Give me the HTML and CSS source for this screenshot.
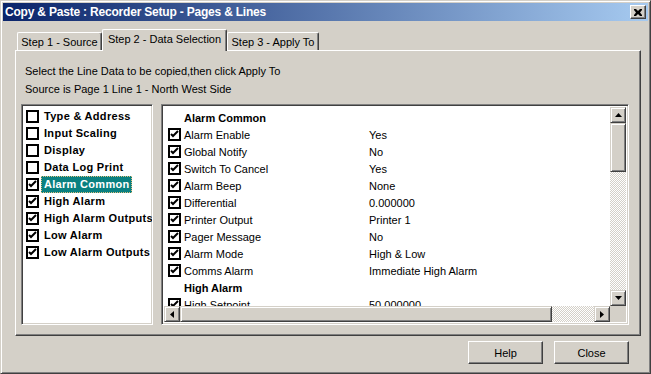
FILE: index.html
```html
<!DOCTYPE html>
<html lang="en">
<head>
  <meta charset="UTF-8">
  <title>Copy &amp; Paste : Recorder Setup - Pages &amp; Lines</title>
  <link rel="stylesheet" href="styles.css">
</head>
<body>
  <div class="window">
    <div class="titlebar">
      <span class="title">Copy &amp; Paste : Recorder Setup - Pages &amp; Lines</span>
      <span class="close-btn">
        <svg width="8" height="7" viewBox="0 0 8 7"><path d="M0 0h2l2 2 2-2h2v1l-2 2.5 2 2.5v1h-2l-2-2-2 2h-2v-1l2-2.5-2-2.5z" fill="#000"/></svg>
      </span>
    </div>

    <div class="client">
      <div class="tabs">
        <div class="tab tab1">Step 1 - Source</div>
        <div class="tab tab2 active">Step 2 - Data Selection</div>
        <div class="tab tab3">Step 3 - Apply To</div>
      </div>

      <div class="panel">
        <p class="info">Select the Line Data to be copied,then click Apply To</p>
        <p class="info">Source is Page 1 Line 1 - North West Side</p>

        <div class="lists">
          <div class="sunken left-list">
            <div class="lrow"><span class="cb"></span><span class="ltext">Type &amp; Address</span></div>
            <div class="lrow"><span class="cb"></span><span class="ltext">Input Scaling</span></div>
            <div class="lrow"><span class="cb"></span><span class="ltext">Display</span></div>
            <div class="lrow"><span class="cb"></span><span class="ltext">Data Log Print</span></div>
            <div class="lrow"><span class="cb on"><svg width="9" height="9" viewBox="0 0 9 9"><path d="M1 4l2 2 5-5" /></svg></span><span class="ltext selected">Alarm Common</span></div>
            <div class="lrow"><span class="cb on"><svg width="9" height="9" viewBox="0 0 9 9"><path d="M1 4l2 2 5-5" /></svg></span><span class="ltext">High Alarm</span></div>
            <div class="lrow"><span class="cb on"><svg width="9" height="9" viewBox="0 0 9 9"><path d="M1 4l2 2 5-5" /></svg></span><span class="ltext">High Alarm Outputs</span></div>
            <div class="lrow"><span class="cb on"><svg width="9" height="9" viewBox="0 0 9 9"><path d="M1 4l2 2 5-5" /></svg></span><span class="ltext">Low Alarm</span></div>
            <div class="lrow"><span class="cb on"><svg width="9" height="9" viewBox="0 0 9 9"><path d="M1 4l2 2 5-5" /></svg></span><span class="ltext">Low Alarm Outputs</span></div>
          </div>

          <div class="sunken right-list">
            <div class="rcontent">
              <div class="rrow head"><span class="rname">Alarm Common</span></div>
              <div class="rrow"><span class="cb on"><svg width="9" height="9" viewBox="0 0 9 9"><path d="M1 4l2 2 5-5" /></svg></span><span class="rname">Alarm Enable</span><span class="rval">Yes</span></div>
              <div class="rrow"><span class="cb on"><svg width="9" height="9" viewBox="0 0 9 9"><path d="M1 4l2 2 5-5" /></svg></span><span class="rname">Global Notify</span><span class="rval">No</span></div>
              <div class="rrow"><span class="cb on"><svg width="9" height="9" viewBox="0 0 9 9"><path d="M1 4l2 2 5-5" /></svg></span><span class="rname">Switch To Cancel</span><span class="rval">Yes</span></div>
              <div class="rrow"><span class="cb on"><svg width="9" height="9" viewBox="0 0 9 9"><path d="M1 4l2 2 5-5" /></svg></span><span class="rname">Alarm Beep</span><span class="rval">None</span></div>
              <div class="rrow"><span class="cb on"><svg width="9" height="9" viewBox="0 0 9 9"><path d="M1 4l2 2 5-5" /></svg></span><span class="rname">Differential</span><span class="rval">0.000000</span></div>
              <div class="rrow"><span class="cb on"><svg width="9" height="9" viewBox="0 0 9 9"><path d="M1 4l2 2 5-5" /></svg></span><span class="rname">Printer Output</span><span class="rval">Printer 1</span></div>
              <div class="rrow"><span class="cb on"><svg width="9" height="9" viewBox="0 0 9 9"><path d="M1 4l2 2 5-5" /></svg></span><span class="rname">Pager Message</span><span class="rval">No</span></div>
              <div class="rrow"><span class="cb on"><svg width="9" height="9" viewBox="0 0 9 9"><path d="M1 4l2 2 5-5" /></svg></span><span class="rname">Alarm Mode</span><span class="rval">High &amp; Low</span></div>
              <div class="rrow"><span class="cb on"><svg width="9" height="9" viewBox="0 0 9 9"><path d="M1 4l2 2 5-5" /></svg></span><span class="rname">Comms Alarm</span><span class="rval">Immediate High Alarm</span></div>
              <div class="rrow head"><span class="rname">High Alarm</span></div>
              <div class="rrow"><span class="cb on"><svg width="9" height="9" viewBox="0 0 9 9"><path d="M1 4l2 2 5-5" /></svg></span><span class="rname">High Setpoint</span><span class="rval">50.000000</span></div>
            </div>

            <div class="vscroll">
              <span class="sbtn"><svg width="7" height="4" viewBox="0 0 7 4"><path d="M3.5 0L7 4H0z" fill="#000"/></svg></span>
              <span class="thumb vthumb"></span>
              <span class="track"></span>
              <span class="sbtn"><svg width="7" height="4" viewBox="0 0 7 4"><path d="M0 0h7L3.5 4z" fill="#000"/></svg></span>
            </div>

            <div class="hscroll">
              <span class="sbtn"><svg width="4" height="7" viewBox="0 0 4 7"><path d="M0 3.5L4 0v7z" fill="#000"/></svg></span>
              <span class="thumb hthumb"></span>
              <span class="track"></span>
              <span class="sbtn"><svg width="4" height="7" viewBox="0 0 4 7"><path d="M0 0l4 3.5L0 7z" fill="#000"/></svg></span>
            </div>

            <div class="corner"></div>
          </div>
        </div>
      </div>

      <div class="buttons">
        <button class="btn">Help</button>
        <button class="btn">Close</button>
      </div>
    </div>
  </div>
</body>
</html>
```

FILE: styles.css
```css
html, body {
  margin: 0;
  padding: 0;
  background: #d4d0c8;
}
body {
  font-family: "Liberation Sans", Arial, sans-serif;
  font-size: 11px;
  color: #000;
}
.window {
  width: 651px;
  height: 374px;
  box-sizing: border-box;
  border: 1px solid;
  border-color: #d4d0c8 #404040 #404040 #d4d0c8;
  box-shadow: inset 1px 1px #fff, inset -1px -1px #808080;
  padding: 2px;
  background: #d4d0c8;
  display: flex;
  flex-direction: column;
}
.titlebar {
  height: 18px;
  background: linear-gradient(to right, #0a246a, #a6caf0);
  display: flex;
  align-items: center;
  justify-content: space-between;
  padding: 0 2px 0 2px;
}
.title {
  color: #fff;
  font-weight: bold;
  font-size: 12px;
  letter-spacing: -0.2px;
}
.close-btn {
  width: 16px;
  height: 14px;
  box-sizing: border-box;
  background: #d4d0c8;
  border: 1px solid;
  border-color: #fff #404040 #404040 #fff;
  box-shadow: inset -1px -1px #808080;
  display: flex;
  align-items: center;
  justify-content: center;
}
.client {
  flex: 1;
  padding: 8px 19px 0 12px;
}
.tabs {
  display: flex;
  align-items: flex-end;
  height: 21px;
  padding-left: 2px;
}
.tab {
  height: 18px;
  box-sizing: border-box;
  border-top: 1px solid #fff;
  border-left: 1px solid #fff;
  border-right: 1px solid #404040;
  border-radius: 2px 2px 0 0;
  box-shadow: inset -1px 0 #808080;
  display: flex;
  align-items: center;
  justify-content: center;
  padding-top: 1px;
  background: #d4d0c8;
}
.tab1 { width: 85px; }
.tab2 { width: 125px; }
.tab3 { width: 92px; }
.tab.active {
  height: 22px;
  margin-bottom: -1px;
  position: relative;
  z-index: 1;
  padding-top: 0;
  padding-bottom: 3px;
}
.panel {
  width: 626px;
  height: 286px;
  box-sizing: border-box;
  border: 1px solid;
  border-color: #fff #404040 #404040 #fff;
  box-shadow: inset -1px -1px #808080;
  padding: 11px 0 0 5px;
}
.info {
  margin: 0 0 0 4px;
  line-height: 18px;
}
.lists {
  display: flex;
  gap: 8px;
  margin-top: 6px;
}
.sunken {
  box-sizing: border-box;
  height: 221px;
  background: #fff;
  border: 1px solid;
  border-color: #808080 #fff #fff #808080;
  box-shadow: inset 1px 1px #404040, inset -1px -1px #d4d0c8;
  padding: 2px;
  overflow: hidden;
}
.left-list {
  width: 132px;
  padding: 3px 0 0 4px;
}
.lrow {
  height: 17px;
  display: flex;
  align-items: center;
  white-space: nowrap;
}
.cb {
  flex: none;
  width: 13px;
  height: 13px;
  box-sizing: border-box;
  border: 2px solid #000;
  background: #fff;
  display: flex;
  align-items: center;
  justify-content: center;
}
.cb svg path {
  fill: none;
  stroke: #000;
  stroke-width: 2;
}
.ltext {
  font-weight: bold;
  letter-spacing: 0.3px;
  margin-left: 2px;
  padding: 0 1px 0 2px;
  line-height: 15px;
  border: 1px solid transparent;
}
.ltext.selected {
  background: #0a8080;
  color: #fff;
  border: 1px dotted #e0c080;
}
.right-list {
  width: 468px;
  display: grid;
  grid-template-columns: 1fr 16px;
  grid-template-rows: 1fr 16px;
}
.rcontent {
  overflow: hidden;
  padding: 2px 0 0 4px;
}
.rrow {
  height: 17px;
  display: flex;
  align-items: center;
  white-space: nowrap;
}
.rrow.head .rname {
  font-weight: bold;
  margin-left: 16px;
}
.rname {
  width: 185px;
  margin-left: 3px;
}
.vscroll {
  display: flex;
  flex-direction: column;
}
.hscroll {
  display: flex;
}
.sbtn, .thumb {
  flex: none;
  box-sizing: border-box;
  background: #d4d0c8;
  border: 1px solid;
  border-color: #d4d0c8 #404040 #404040 #d4d0c8;
  box-shadow: inset 1px 1px #fff, inset -1px -1px #808080;
  display: flex;
  align-items: center;
  justify-content: center;
}
.sbtn {
  width: 16px;
  height: 16px;
}
.vthumb {
  height: 49px;
}
.hthumb {
  width: 372px;
}
.track {
  flex: 1;
  background-color: #fff;
  background-image: conic-gradient(#d4d0c8 25%, #fff 0 50%, #d4d0c8 0 75%, #fff 0);
  background-size: 2px 2px;
}
.corner {
  background: #d4d0c8;
}
.buttons {
  display: flex;
  justify-content: flex-end;
  gap: 11px;
  margin-top: 5px;
}
.btn {
  width: 75px;
  height: 23px;
  box-sizing: border-box;
  font-family: "Liberation Sans", Arial, sans-serif;
  font-size: 11px;
  color: #000;
  background: #d4d0c8;
  border: 1px solid;
  border-color: #fff #404040 #404040 #fff;
  box-shadow: inset -1px -1px #808080;
  padding: 0;
}
```
